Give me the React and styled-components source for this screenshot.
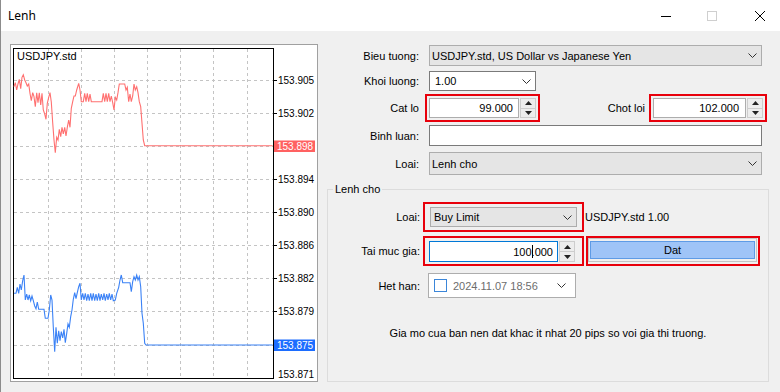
import React from "react";
import styled, { createGlobalStyle } from "styled-components";

const GlobalStyle = createGlobalStyle`
  html, body {
    margin: 0;
    padding: 0;
    background: #f0f0f0;
  }
  body {
    font-family: "Liberation Sans", Arial, sans-serif;
    font-size: 11px;
    color: #000;
  }
`;

const redPts = [[42,140],[46,128],[50,150],[54,132],[58,118],[62,146],[66,112],[70,104],[74,120],[78,128],[82,138],[86,132],[90,160],[94,182],[98,158],[102,170],[106,200],[110,158],[114,188],[118,158],[122,195],[126,160],[130,210],[134,222],[138,238],[142,190],[146,172],[150,158],[154,186],[158,248],[162,300],[166,338],[170,292],[174,300],[178,268],[182,290],[186,262],[190,282],[194,262],[198,288],[202,262],[206,240],[210,262],[214,205],[218,185],[222,168],[226,168],[230,150],[236,130],[240,150],[244,185],[250,185],[254,160],[258,185],[262,160],[266,185],[270,162],[274,185],[306,185],[310,160],[314,185],[318,160],[322,185],[326,160],[330,185],[334,168],[338,188],[342,210],[346,172],[350,180],[354,158],[358,132],[374,132],[378,150],[382,142],[386,185],[390,162],[394,185],[398,168],[402,132],[406,150],[410,140],[414,158],[418,185],[422,200],[426,250],[430,300],[434,317],[818,317]];

const bluePts = [[42,250],[48,250],[52,232],[56,250],[60,222],[64,240],[68,212],[72,195],[76,270],[80,252],[84,270],[88,255],[92,272],[96,258],[100,272],[104,288],[108,296],[112,276],[116,298],[132,298],[136,325],[144,325],[148,300],[152,255],[156,270],[160,352],[164,425],[168,352],[172,400],[176,362],[180,392],[184,365],[188,384],[192,358],[196,398],[200,370],[204,342],[208,352],[212,320],[216,300],[220,268],[224,248],[228,266],[232,248],[236,230],[240,220],[244,270],[248,250],[252,270],[256,250],[260,272],[264,252],[268,272],[272,250],[276,272],[280,250],[284,272],[288,252],[292,272],[296,250],[300,272],[304,252],[308,270],[312,250],[316,272],[320,252],[324,270],[328,250],[332,270],[336,252],[340,272],[346,270],[350,250],[356,232],[360,210],[364,195],[368,218],[390,218],[394,245],[398,215],[402,200],[406,210],[410,195],[414,210],[418,200],[422,230],[426,310],[430,340],[434,400],[438,405],[818,405]];

const toPath = (pts, off) =>
  "M " + pts.map(([x, y]) => `${(x / 3).toFixed(1)} ${(y / 3 + off).toFixed(1)}`).join(" L ");

const gridX = [48, 81, 114, 147, 180, 213, 247];
const axis = [
  { y: 80.5, v: "153.905" },
  { y: 113.5, v: "153.902" },
  { y: 179.5, v: "153.894" },
  { y: 212.5, v: "153.890" },
  { y: 245.5, v: "153.886" },
  { y: 278.5, v: "153.882" },
  { y: 311.5, v: "153.879" },
  { y: 374.5, v: "153.871" },
];
const gridY = [80.5, 113.5, 146.5, 179.5, 212.5, 245.5, 278.5, 311.5, 345.5];

export default function App() {
  return (
    <>
      <GlobalStyle />
      <Window>
        <TitleBar>
          <Title>Lenh</Title>
          <WinButton>
            <svg width="10" height="10" viewBox="0 0 10 10">
              <line x1="0" y1="5.5" x2="10" y2="5.5" stroke="#000" />
            </svg>
          </WinButton>
          <WinButton>
            <svg width="10" height="10" viewBox="0 0 10 10">
              <rect x="0.5" y="0.5" width="9" height="9" fill="none" stroke="#cfcfcf" />
            </svg>
          </WinButton>
          <WinButton $last>
            <svg width="10" height="10" viewBox="0 0 10 10">
              <path d="M0 0 L10 10 M10 0 L0 10" stroke="#000" strokeWidth="1" />
            </svg>
          </WinButton>
        </TitleBar>

        <Body>
          <ChartFrame>
            <svg width="306" height="336" viewBox="11 45 306 336">
              <rect x="11" y="45" width="306" height="336" fill="#fff" />
              {gridX.map((x) => (
                <line key={x} x1={x + 0.5} y1="49" x2={x + 0.5} y2="378" stroke="#c4c4c4" strokeDasharray="3 3" />
              ))}
              {gridY.map((y) => (
                <line key={y} x1="14" y1={y} x2="273" y2={y} stroke="#c4c4c4" strokeDasharray="3 3" />
              ))}
              <rect x="13.5" y="48.5" width="260" height="330" fill="none" stroke="#000" />
              {gridY.map((y) => (
                <line key={"t" + y} x1="273.5" y1={y} x2="277" y2={y} stroke="#000" />
              ))}
              <path d={toPath(redPts, 40)} fill="none" stroke="#ff7070" strokeWidth="1.1" />
              <path d={toPath(bluePts, 210)} fill="none" stroke="#3b82f6" strokeWidth="1.1" />
              <text x="17" y="60" fontSize="11" fontFamily="Liberation Sans, sans-serif">USDJPY.std</text>
              {axis.map((a) => (
                <text key={a.v} x="278" y={a.y + 3.5} fontSize="10" fontFamily="Liberation Sans, sans-serif">
                  {a.v}
                </text>
              ))}
              <rect x="274" y="140.5" width="41" height="11.5" fill="#ff6161" />
              <text x="277" y="150" fontSize="10" fill="#fff" fontFamily="Liberation Sans, sans-serif">153.898</text>
              <rect x="274" y="339.5" width="41" height="11.5" fill="#1c6dff" />
              <text x="277" y="349" fontSize="10" fill="#fff" fontFamily="Liberation Sans, sans-serif">153.875</text>
            </svg>
          </ChartFrame>

          <Panel>
            <Row $h={21} $mt={1}>
              <Label>Bieu tuong:</Label>
              <Combo $w={333} $h={21} $pl={2}>
                <ComboText>USDJPY.std, US Dollar vs Japanese Yen</ComboText>
                <Chevron />
              </Combo>
            </Row>
            <Row $h={20} $mt={5}>
              <Label>Khoi luong:</Label>
              <Combo $w={107} $h={20} $pl={5} $editable>
                <ComboText>1.00</ComboText>
                <Chevron />
              </Combo>
            </Row>
            <Row $h={28} $mt={3}>
              <Label $mr={6}>Cat lo</Label>
              <Marked $pad="2px">
                <SpinBox value="99.000" w={90} h={20} pr={5} />
              </Marked>
              <Label $w={105} $mr={4}>Chot loi</Label>
              <Marked $pad="2px">
                <SpinBox value="102.000" w={93} h={20} pr={6} />
              </Marked>
            </Row>
            <Row $h={21} $mt={3}>
              <Label>Binh luan:</Label>
              <TextInput />
            </Row>
            <Row $h={23} $mt={6}>
              <Label>Loai:</Label>
              <Combo $w={333} $h={23} $pl={2}>
                <ComboText>Lenh cho</ComboText>
                <Chevron />
              </Combo>
            </Row>

            <Group>
              <Legend>Lenh cho</Legend>
              <GroupBody>
                <Row $h={30} $mt={7}>
                  <Label $mr={3}>Loai:</Label>
                  <Marked $pad="3px 5px">
                    <Combo $w={147} $h={20} $pl={3}>
                      <ComboText>Buy Limit</ComboText>
                      <Chevron />
                    </Combo>
                  </Marked>
                  <Note>USDJPY.std 1.00</Note>
                </Row>
                <Row $h={30} $mt={4}>
                  <Label $mr={3}>Tai muc gia:</Label>
                  <Marked $pad="3px 7px 2px 4px">
                    <SpinBox value="100.000" caret w={129} h={21} pr={4} focused />
                  </Marked>
                  <Marked $pad="0 1px 2px 0" $ml={2} $stretch>
                    <ButtonFrame>
                      <PrimaryButton>Dat</PrimaryButton>
                    </ButtonFrame>
                  </Marked>
                </Row>
                <Row $h={25} $mt={7}>
                  <Label $mr={8}>Het han:</Label>
                  <DateBox>
                    <Check />
                    <DateText>2024.11.07 18:56</DateText>
                    <Chevron />
                  </DateBox>
                </Row>
                <Message>Gia mo cua ban nen dat khac it nhat 20 pips so voi gia thi truong.</Message>
              </GroupBody>
            </Group>
          </Panel>
        </Body>
      </Window>
    </>
  );
}

function Chevron() {
  return (
    <ChevronIcon width="9" height="5" viewBox="0 0 9 5">
      <polyline points="0.5,0.5 4.5,4.5 8.5,0.5" fill="none" stroke="#333" strokeWidth="1" />
    </ChevronIcon>
  );
}

function SpinBox({ value, w, h, pr, focused, caret }) {
  const [intPart, frac] = value.split(".");
  return (
    <SpinWrap>
      <Edit $w={w} $h={h} $pr={pr} $focused={focused}>
        {caret ? (
          <>
            {intPart}
            <Caret />
            {"." + frac}
          </>
        ) : (
          value
        )}
      </Edit>
      <Spinner $h={h}>
        <SpinHalf>
          <svg width="7" height="4" viewBox="0 0 7 4">
            <polygon points="3.5,0 7,4 0,4" fill="#222" />
          </svg>
        </SpinHalf>
        <SpinHalf $bottom>
          <svg width="7" height="4" viewBox="0 0 7 4">
            <polygon points="0,0 7,0 3.5,4" fill="#222" />
          </svg>
        </SpinHalf>
      </Spinner>
    </SpinWrap>
  );
}

const Window = styled.div`
  width: 780px;
  height: 392px;
  box-sizing: border-box;
  border-left: 1px solid #8c8c8c;
  background: #f0f0f0;
  display: flex;
  flex-direction: column;
  overflow: hidden;
`;

const TitleBar = styled.div`
  height: 31px;
  flex: none;
  background: #fff;
  display: flex;
  align-items: center;
  padding-left: 7px;
  font-family: "Noto Sans", "Open Sans", sans-serif;
  font-size: 12px;
`;

const Title = styled.span`
  flex: 1;
`;

const WinButton = styled.div`
  width: ${(p) => (p.$last ? 45 : 46)}px;
  height: 31px;
  box-sizing: border-box;
  display: flex;
  align-items: center;
  justify-content: ${(p) => (p.$last ? "flex-end" : "center")};
  padding-right: ${(p) => (p.$last ? 15 : 0)}px;
  svg {
    display: block;
  }
`;

const Body = styled.div`
  flex: 1;
  display: flex;
  gap: 9px;
  padding: 13px 0 10px 9px;
  min-height: 0;
`;

const ChartFrame = styled.div`
  width: 308px;
  height: 338px;
  box-sizing: border-box;
  border: 1px solid #a0a0a0;
  background: #fff;
  flex: none;
  svg {
    display: block;
  }
`;

const Panel = styled.div`
  width: 442px;
  display: flex;
  flex-direction: column;
`;

const Row = styled.div`
  display: flex;
  align-items: center;
  height: ${(p) => p.$h}px;
  margin-top: ${(p) => p.$mt || 0}px;
  flex: none;
`;

const Label = styled.label`
  width: ${(p) => p.$w || 92}px;
  margin-right: ${(p) => (p.$mr === undefined ? 10 : p.$mr)}px;
  flex: none;
  text-align: right;
  white-space: nowrap;
`;

const Combo = styled.div`
  box-sizing: border-box;
  width: ${(p) => p.$w}px;
  height: ${(p) => p.$h}px;
  background: ${(p) => (p.$editable ? "#fff" : "#e5e5e5")};
  border: 1px solid ${(p) => (p.$editable ? "#7a7a7a" : "#adadad")};
  display: flex;
  align-items: center;
  padding: 0 4px 0 ${(p) => p.$pl}px;
  flex: none;
`;

const ComboText = styled.span`
  flex: 1;
  white-space: nowrap;
  overflow: hidden;
`;

const ChevronIcon = styled.svg`
  display: block;
  flex: none;
`;

const Marked = styled.div`
  border: 2px solid #e8000b;
  padding: ${(p) => p.$pad};
  margin-left: ${(p) => p.$ml || 0}px;
  align-self: ${(p) => (p.$stretch ? "stretch" : "auto")};
  display: flex;
  flex: none;
`;

const SpinWrap = styled.div`
  display: flex;
`;

const Edit = styled.div`
  box-sizing: border-box;
  width: ${(p) => p.$w}px;
  height: ${(p) => p.$h}px;
  border: 1px solid ${(p) => (p.$focused ? "#0078d7" : "#adadad")};
  background: #fff;
  display: flex;
  align-items: center;
  justify-content: flex-end;
  padding-right: ${(p) => p.$pr}px;
  white-space: nowrap;
`;

const Caret = styled.span`
  display: inline-block;
  width: 1px;
  height: 13px;
  background: #000;
  margin-right: -1px;
`;

const Spinner = styled.div`
  box-sizing: border-box;
  width: 16px;
  height: ${(p) => p.$h}px;
  margin-left: 1px;
  border: 1px solid #cdcdcd;
  background: #ededed;
  display: flex;
  flex-direction: column;
`;

const SpinHalf = styled.div`
  flex: 1;
  display: flex;
  align-items: center;
  justify-content: center;
  border-top: ${(p) => (p.$bottom ? "1px solid #cdcdcd" : "none")};
  svg {
    display: block;
  }
`;

const TextInput = styled.div`
  box-sizing: border-box;
  width: 333px;
  height: 21px;
  border: 1px solid #7a7a7a;
  background: #fff;
`;

const Group = styled.fieldset`
  flex: 1;
  margin: 8px 0 0 0;
  padding: 0;
  border: 1px solid #dcdcdc;
  min-width: 0;
  display: flex;
  flex-direction: column;
`;

const Legend = styled.legend`
  margin-left: 5px;
  padding: 0 2px;
  line-height: 12px;
`;

const GroupBody = styled.div`
  display: flex;
  flex-direction: column;
`;

const Note = styled.span`
  margin-left: 1px;
  white-space: nowrap;
`;

const ButtonFrame = styled.div`
  flex: 1;
  display: flex;
  border: 1px solid #c4c4c4;
  padding: 2px 1px;
`;

const PrimaryButton = styled.button`
  flex: 1;
  width: 165px;
  margin: 0;
  border: 1px solid #5e9be6;
  background: #9fc4f7;
  font-family: "Liberation Sans", Arial, sans-serif;
  font-size: 11px;
  color: #000;
  padding: 0;
`;

const DateBox = styled.div`
  box-sizing: border-box;
  width: 148px;
  height: 25px;
  border: 1px solid #adadad;
  background: #fff;
  display: flex;
  align-items: center;
  padding: 0 10px 0 5px;
`;

const Check = styled.span`
  width: 13px;
  height: 13px;
  box-sizing: border-box;
  border: 1px solid #3b86d9;
  background: #fff;
  flex: none;
  margin-right: 6px;
`;

const DateText = styled.span`
  width: 85px;
  overflow: hidden;
  white-space: nowrap;
  color: #6d6d6d;
  margin-right: 19px;
  flex: none;
`;

const Message = styled.div`
  margin-top: 29px;
  text-align: center;
  line-height: 13px;
`;
